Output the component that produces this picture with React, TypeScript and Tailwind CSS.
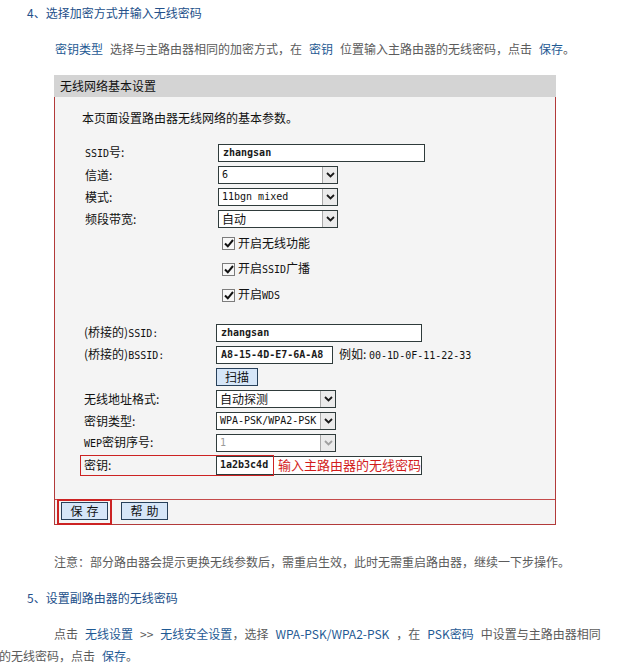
import React from "react";

const cjk = "font-['Noto_Sans_CJK_SC','Liberation_Sans',sans-serif]";
const mono = "font-['DejaVu_Sans_Mono','Liberation_Mono',monospace] text-[10px]";

function A({ children }: { children: React.ReactNode }) {
  return <span className={mono}>{children}</span>;
}

// wide space used around the links in the article text
function S() {
  return <span className="inline-block w-[7px]" />;
}

function Chevron({ color = "#1a1a1a" }: { color?: string }) {
  return (
    <svg width="9" height="6" viewBox="0 0 9 6">
      <path d="M1 1 L4.5 4.5 L8 1" fill="none" stroke={color} strokeWidth="1.8" />
    </svg>
  );
}

function Select({ value, mono: isMono, disabled }: { value: string; mono?: boolean; disabled?: boolean }) {
  return (
    <div className="flex h-[18px] w-[120px] border border-[#2f3b3b] bg-white">
      <span
        className={`flex-1 pl-[3px] leading-[16px] overflow-hidden whitespace-nowrap ${isMono ? mono : "text-[12px]"} ${disabled ? "text-[#9a9a9a]" : "text-[#111]"}`}
      >
        {value}
      </span>
      <span className="flex w-[15px] items-center justify-center border-l border-[#a9a9a9] bg-[#ebebeb]">
        <Chevron color={disabled ? "#a0a0a0" : "#1a1a1a"} />
      </span>
    </div>
  );
}

function Input({ value, w }: { value: string; w: string }) {
  return (
    <div className={`h-[18px] ${w} border border-[#2f3b3b] bg-white pl-[4px] leading-[16px] ${mono} text-[#1a1a1a] font-semibold`}>
      {value}
    </div>
  );
}

function Check({ children }: { children: React.ReactNode }) {
  return (
    <div className="flex h-[26px] items-center pl-[4px]">
      <span className="flex h-[13px] w-[13px] items-center justify-center border border-[#7c7c7c] bg-[#f7f7f7]">
        <svg width="10" height="9" viewBox="0 0 10 9">
          <path d="M1 4.5 L3.8 7.3 L9 1" fill="none" stroke="#111" strokeWidth="2" />
        </svg>
      </span>
      <span className="ml-[3px] text-[12px] text-[#111]">{children}</span>
    </div>
  );
}

function Row({ label, lw, children }: { label: React.ReactNode; lw: string; children: React.ReactNode }) {
  return (
    <div className="flex h-[22px] items-center">
      <span className={`${lw} text-[12px] text-[#111]`}>{label}</span>
      {children}
    </div>
  );
}

function Btn({ children }: { children: React.ReactNode }) {
  return (
    <span className="flex h-[18px] w-[47px] items-center justify-center border border-[#27405a] bg-[#d6e6f8] text-[12px] text-[#111] tracking-[4px] pl-[4px]">
      {children}
    </span>
  );
}

const link = "text-[#1f5a94]";

export default function App() {
  return (
    <div className={`h-[672px] w-[618px] overflow-hidden bg-white ${cjk} text-[12px] leading-[16px]`}>
      <p className="pl-[27px] pt-[5px] text-[#23508a]">4、选择加密方式并输入无线密码</p>

      <p className="mt-[20px] pl-[55px] text-[#5b5b5b]">
        <span className={link}>密钥类型</span>
        <S />选择与主路由器相同的加密方式，在<S />
        <span className={link}>密钥</span>
        <S />位置输入主路由器的无线密码，点击<S />
        <span className={link}>保存</span>。
      </p>

      <div className="ml-[54px] mt-[18px] w-[502px]">
        <div className="h-[22px] bg-[#d4d4d4] pl-[6px] leading-[22px] text-[#111]">无线网络基本设置</div>
        <div className="border-x border-b border-[#b23a3a] bg-[#f4f4f4]">
          <p className="pl-[27px] pt-[13px] text-[#111]">本页面设置路由器无线网络的基本参数。</p>

          <div className="mt-[16px] pl-[30px]">
            <Row lw="w-[133px]" label={<><A>SSID</A>号:</>}>
              <Input value="zhangsan" w="w-[207px]" />
            </Row>
            <Row lw="w-[133px]" label="信道:">
              <Select value="6" mono />
            </Row>
            <Row lw="w-[133px]" label="模式:">
              <Select value="11bgn mixed" mono />
            </Row>
            <Row lw="w-[133px]" label="频段带宽:">
              <Select value="自动" />
            </Row>
            <div className="pl-[133px]">
              <Check>开启无线功能</Check>
              <Check>
                开启<A>SSID</A>广播
              </Check>
              <Check>
                开启<A>WDS</A>
              </Check>
            </div>
          </div>

          <div className="mt-[14px] pl-[29px]">
            <Row lw="w-[132px]" label={<>(桥接的)<A>SSID:</A></>}>
              <Input value="zhangsan" w="w-[206px]" />
            </Row>
            <Row lw="w-[132px]" label={<>(桥接的)<A>BSSID:</A></>}>
              <Input value="A8-15-4D-E7-6A-A8" w="w-[117px]" />
              <span className="ml-[6px] text-[#111]">
                例如: <A>00-1D-0F-11-22-33</A>
              </span>
            </Row>
            <Row lw="w-[132px]" label="">
              <span className="flex h-[18px] w-[42px] items-center justify-center border border-[#27405a] bg-[#d6e6f8] text-[12px] text-[#111]">
                扫描
              </span>
            </Row>
            <Row lw="w-[132px]" label="无线地址格式:">
              <Select value="自动探测" />
            </Row>
            <Row lw="w-[132px]" label="密钥类型:">
              <Select value="WPA-PSK/WPA2-PSK" mono />
            </Row>
            <Row lw="w-[132px]" label={<><A>WEP</A>密钥序号:</>}>
              <Select value="1" mono disabled />
            </Row>
            <div className="relative">
              <Row lw="w-[132px]" label="密钥:">
                <div className="flex h-[19px] w-[206px] items-center border border-[#2f3b3b] bg-white">
                  <span className={`w-[56px] pl-[3px] ${mono} font-semibold text-[#1a1a1a]`}>1a2b3c4d</span>
                  <span className="ml-[5px] text-[13px] text-[#d21c1c]">输入主路由器的无线密码</span>
                </div>
              </Row>
              <div className="absolute left-[-4px] top-[1px] h-[21px] w-[194px] border border-[#cc2222]" />
            </div>
          </div>

          <div className="mt-[23px] flex gap-[13px] border-t border-[#c44a4a] pb-[4px] pl-[6px] pt-[2px]">
            <div className="relative">
              <Btn>保存</Btn>
              <div className="absolute -left-[4px] -top-[3px] h-[26px] w-[55px] border-2 border-[#cc2222]" />
            </div>
            <Btn>帮助</Btn>
          </div>
        </div>
      </div>

      <p className="mt-[29px] pl-[54px] text-[#5b5b5b]">注意：部分路由器会提示更换无线参数后，需重启生效，此时无需重启路由器，继续一下步操作。</p>

      <p className="mt-[20px] pl-[27px] text-[#23508a]">5、设置副路由器的无线密码</p>

      <p className="mt-[17px] -ml-[1px] whitespace-nowrap leading-[22px] text-[#5b5b5b]">
        <span className="pl-[55px]">
          点击<S />
          <span className={link}>无线设置</span>
          <S />&gt;&gt;<S />
          <span className={link}>无线安全设置</span>，选择<S />
          <span className={link}>WPA-PSK/WPA2-PSK</span>
          <S />，在<S />
          <span className={link}>PSK密码</span>
          <S />中设置与主路由器相同
        </span>
        <br />
        的无线密码，点击<S />
        <span className={link}>保存</span>。
      </p>
    </div>
  );
}
